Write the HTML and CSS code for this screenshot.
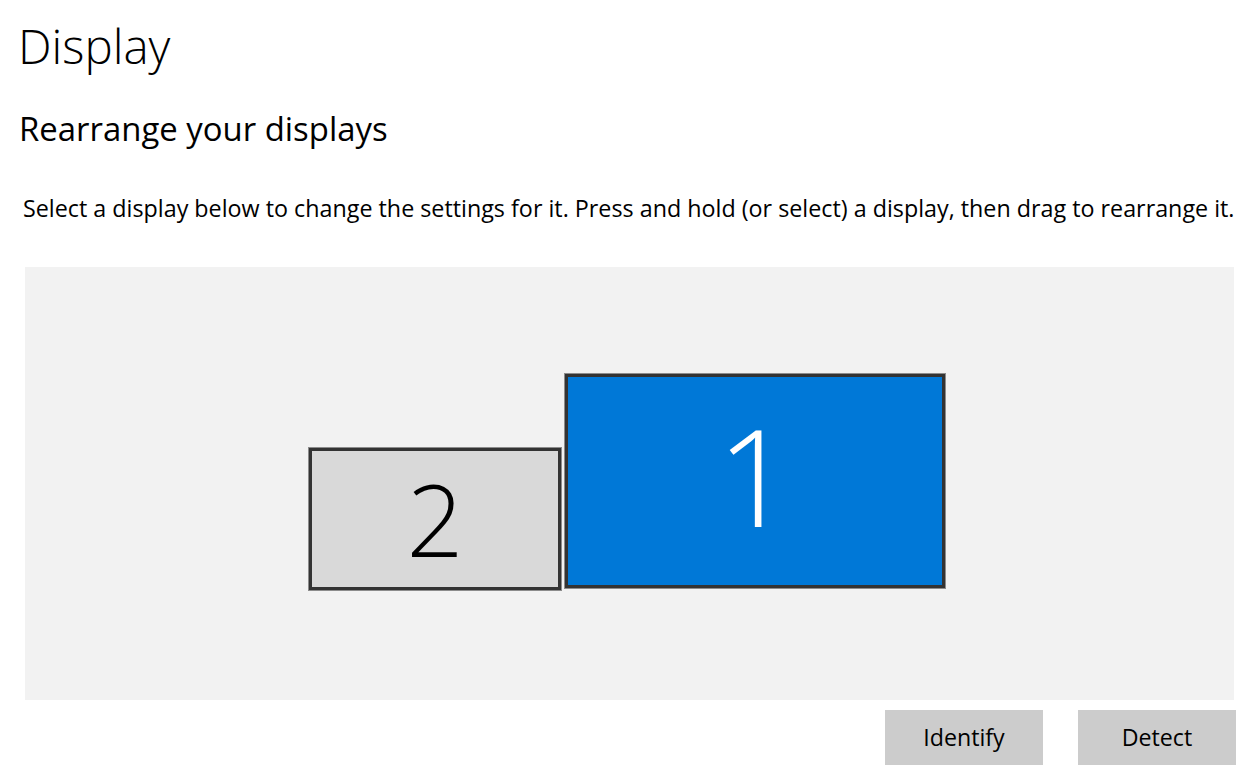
FILE: index.html
```html
<!DOCTYPE html>
<html lang="en">
<head>
<meta charset="utf-8">
<title>Display</title>
<link rel="stylesheet" href="styles.css">
</head>
<body>
<main class="page">
  <h1 class="title">Display</h1>
  <h2 class="subtitle">Rearrange your displays</h2>
  <p class="desc">Select a display below to change the settings for it. Press and hold (or select) a display, then drag to rearrange it.</p>
  <div class="arrange">
    <div class="monitor monitor-2"><span class="num">2</span></div>
    <div class="monitor monitor-1"><span class="num">1</span></div>
  </div>
  <div class="actions">
    <button class="btn">Identify</button>
    <button class="btn">Detect</button>
  </div>
</main>
</body>
</html>
```
FILE: styles.css
```css
html, body {
  margin: 0;
  padding: 0;
  background: #ffffff;
}
body {
  font-family: "Open Sans", "Noto Sans", sans-serif;
  color: #000000;
  width: 1256px;
  height: 770px;
  overflow: hidden;
}
.title {
  margin: 0;
  padding: 16px 0 0 18px;
  font-size: 47.5px;
  line-height: 60px;
  font-weight: 300;
}
.subtitle {
  margin: 0;
  padding: 33px 0 0 19px;
  font-size: 32.9px;
  line-height: 40px;
  font-weight: 400;
}
.desc {
  margin: 0;
  padding: 45px 0 0 23px;
  font-size: 23.3px;
  line-height: 28px;
  white-space: nowrap;
}
.arrange {
  position: relative;
  margin: 45px 0 0 25px;
  width: 1209px;
  height: 433px;
  background: #f2f2f2;
}
.monitor {
  position: absolute;
  box-sizing: border-box;
  border: 3px solid #333333;
  box-shadow: 0 0 0 1px #8c8c8c;
  display: flex;
  align-items: center;
  justify-content: center;
}
.monitor-2 {
  left: 284px;
  top: 181px;
  width: 252px;
  height: 142px;
  padding-bottom: 3px;
  background: #d9d9d9;
  color: #000000;
}
.monitor-1 {
  left: 540px;
  top: 107px;
  width: 380px;
  height: 214px;
  padding-bottom: 12px;
  background: #0078d7;
  color: #ffffff;
}
.num {
  font-weight: 300;
  line-height: 1;
}
.monitor-2 .num {
  font-size: 100px;
}
.monitor-1 .num {
  font-size: 134px;
}
.actions {
  display: flex;
  gap: 35px;
  padding: 10px 0 0 885px;
}
.btn {
  width: 158px;
  height: 55px;
  border: 0;
  margin: 0;
  padding: 0 0 2px 0;
  background: #cccccc;
  font-family: "Open Sans", "Noto Sans", sans-serif;
  font-size: 23.2px;
  color: #000000;
}
```
